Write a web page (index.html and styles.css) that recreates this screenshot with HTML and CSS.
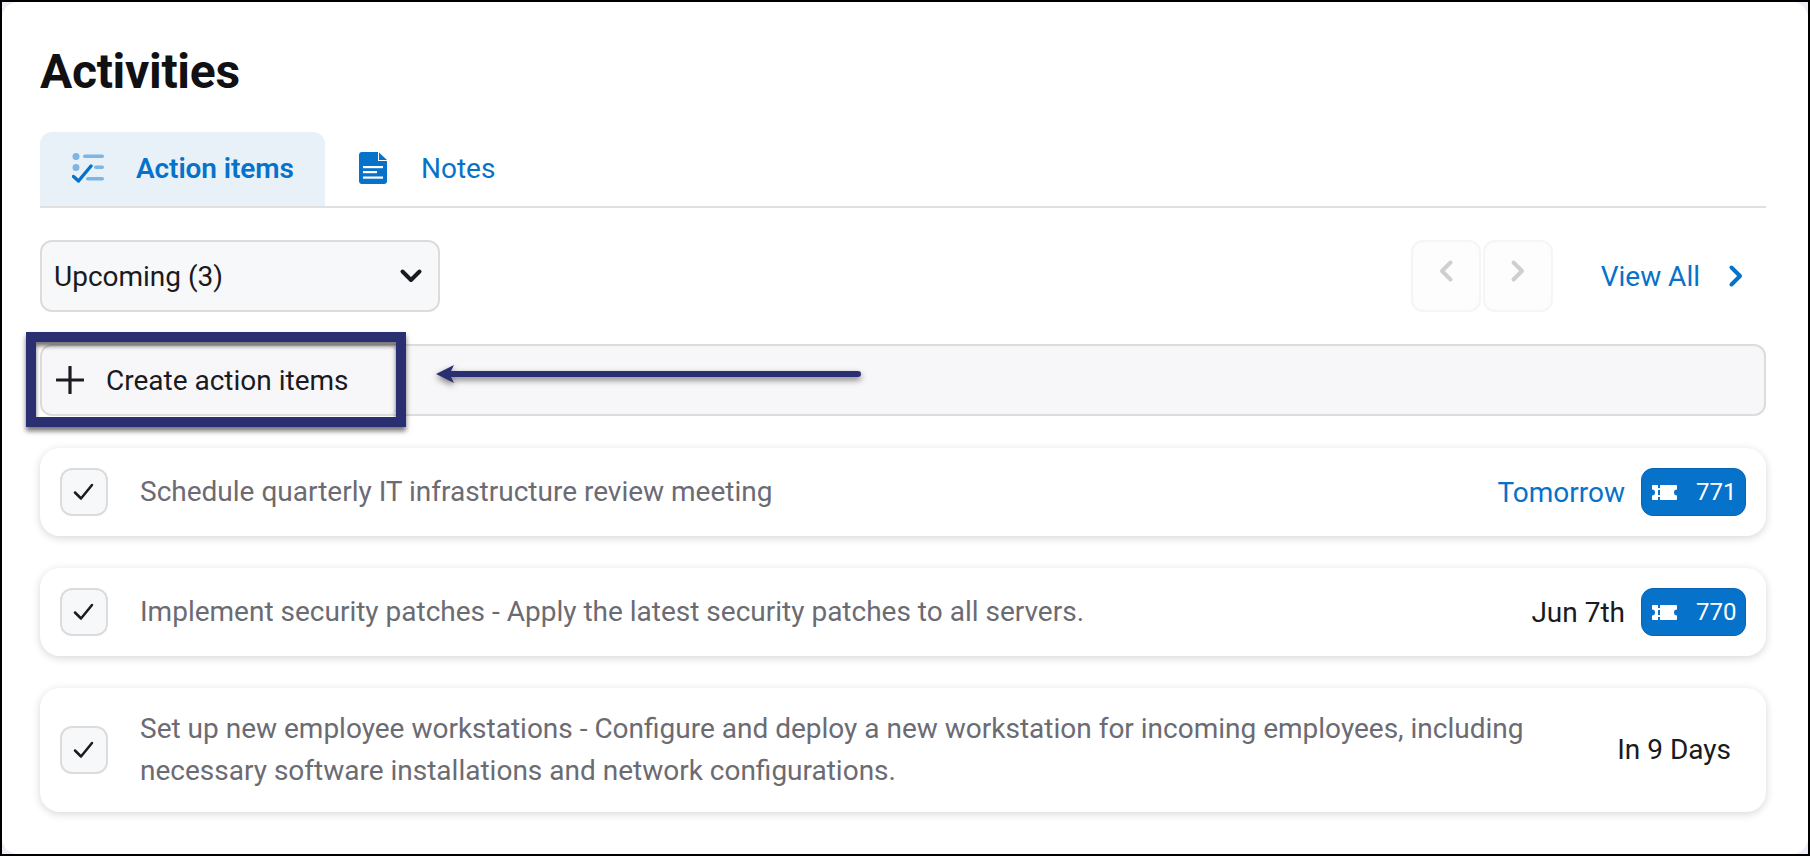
FILE: index.html
```html
<!DOCTYPE html>
<html lang="en">
<head>
<meta charset="utf-8">
<title>Activities</title>
<link rel="stylesheet" href="styles.css">
</head>
<body>
<div class="frame">
  <main class="panel">
    <h1 class="title">Activities</h1>
    <nav class="tabs">
      <a class="tab tab-active">
        <svg class="tab-icon" width="32" height="30" viewBox="0 0 32 30"><circle cx="4" cy="3.5" r="3.5" fill="#7db5e3"/><circle cx="4" cy="14.5" r="3.5" fill="#7db5e3"/><rect x="11" y="1.500" width="21" height="3.600" rx="1.800" fill="#7db5e3"/><rect x="22" y="12.500" width="10" height="3.600" rx="1.800" fill="#7db5e3"/><rect x="14" y="24" width="18" height="3.600" rx="1.800" fill="#7db5e3"/><path d="M1.500 23.500 L6.500 28 L19 13" fill="none" stroke="#0672c9" stroke-width="3.400" stroke-linecap="round" stroke-linejoin="round"/></svg>
        <span>Action items</span>
      </a>
      <a class="tab tab-plain">
        <svg class="tab-icon" width="28" height="32" viewBox="0 0 28 32"><path d="M3 0H19V9H28V29a3 3 0 0 1-3 3H3a3 3 0 0 1-3-3V3a3 3 0 0 1 3-3Z" fill="#0672c9"/><path d="M20 0.500 L28 8 H20Z" fill="#0672c9"/><rect x="4" y="14" width="20" height="2.200" fill="#fff"/><rect x="4" y="19" width="14" height="2.200" fill="#fff"/><rect x="4" y="24.500" width="20" height="2.200" fill="#fff"/></svg>
        <span>Notes</span>
      </a>
    </nav>
    <div class="toolbar">
      <div class="select">
        <span>Upcoming (3)</span>
        <svg width="24" height="16" viewBox="0 0 24 16"><path d="M3.500 3.500 L12 12 L20.500 3.500" fill="none" stroke="#1a1a20" stroke-width="4" stroke-linecap="round" stroke-linejoin="round"/></svg>
      </div>
      <div class="pager">
        <button class="page-btn"><svg width="16" height="24" viewBox="0 0 16 24"><path d="M12.500 3.500 L4 12 L12.500 20.500" fill="none" stroke="#cfcfcf" stroke-width="4" stroke-linecap="round" stroke-linejoin="round"/></svg></button>
        <button class="page-btn"><svg width="16" height="24" viewBox="0 0 16 24"><path d="M3.500 3.500 L12 12 L3.500 20.500" fill="none" stroke="#cfcfcf" stroke-width="4" stroke-linecap="round" stroke-linejoin="round"/></svg></button>
      </div>
      <a class="view-all">
        <span>View All</span>
        <svg width="16" height="24" viewBox="0 0 16 24"><path d="M3.500 3.500 L12 12 L3.500 20.500" fill="none" stroke="#0672c9" stroke-width="4" stroke-linecap="round" stroke-linejoin="round"/></svg>
      </a>
    </div>
    <div class="create-bar">
      <div class="create-btn">
        <svg width="28" height="28" viewBox="0 0 28 28"><path d="M14 1V27M1 14H27" stroke="#1a1a20" stroke-width="3.200" stroke-linecap="round"/></svg>
        <span>Create action items</span>
      </div>
    </div>
    <ul class="items">
      <li class="item">
        <span class="check"><svg width="24" height="20" viewBox="0 0 24 20"><path d="M3 10.500 L9 16.500 L20 3" fill="none" stroke="#1a1a20" stroke-width="2.500" stroke-linecap="round" stroke-linejoin="round"/></svg></span>
        <p class="item-text">Schedule quarterly IT infrastructure review meeting</p>
        <span class="due due-soon">Tomorrow</span>
        <span class="badge"><svg width="25" height="15" viewBox="0 0 25 15"><path fill="#fff" d="M1 0H6V3H8V0H24a1 1 0 0 1 1 1V4.500a3 3 0 0 0 0 6V14a1 1 0 0 1-1 1H8V12H6V15H1a1 1 0 0 1-1-1V10.500a3 3 0 0 0 0-6V1a1 1 0 0 1 1-1ZM6 5V10H8V5Z" fill-rule="evenodd"/></svg><span>771</span></span>
      </li>
      <li class="item">
        <span class="check"><svg width="24" height="20" viewBox="0 0 24 20"><path d="M3 10.500 L9 16.500 L20 3" fill="none" stroke="#1a1a20" stroke-width="2.500" stroke-linecap="round" stroke-linejoin="round"/></svg></span>
        <p class="item-text">Implement security patches - Apply the latest security patches to all servers.</p>
        <span class="due">Jun 7th</span>
        <span class="badge"><svg width="25" height="15" viewBox="0 0 25 15"><path fill="#fff" d="M1 0H6V3H8V0H24a1 1 0 0 1 1 1V4.500a3 3 0 0 0 0 6V14a1 1 0 0 1-1 1H8V12H6V15H1a1 1 0 0 1-1-1V10.500a3 3 0 0 0 0-6V1a1 1 0 0 1 1-1ZM6 5V10H8V5Z" fill-rule="evenodd"/></svg><span>770</span></span>
      </li>
      <li class="item item-tall">
        <span class="check"><svg width="24" height="20" viewBox="0 0 24 20"><path d="M3 10.500 L9 16.500 L20 3" fill="none" stroke="#1a1a20" stroke-width="2.500" stroke-linecap="round" stroke-linejoin="round"/></svg></span>
        <p class="item-text item-text-wrap">Set up new employee workstations - Configure and deploy a new workstation for incoming employees, including necessary software installations and network configurations.</p>
        <span class="due due-only">In 9 Days</span>
      </li>
    </ul>
  </main>
  <div class="callout-box"></div>
  <svg class="callout-arrow" width="428" height="22" viewBox="0 0 428 22"><path d="M1 11 L19 2 L16 8 H423 a3 3 0 0 1 0 6 H16 L19 20Z" fill="#2a2f72"/></svg>
</div>
</body>
</html>
```

FILE: styles.css
```css
* { box-sizing: border-box; }
html, body { margin: 0; padding: 0; }
body {
  width: 1810px;
  height: 856px;
  overflow: hidden;
  font-family: Roboto, "Liberation Sans", sans-serif;
  color: #1a1a20;
}
.frame {
  position: relative;
  width: 1810px;
  height: 856px;
  border: 2px solid #000;
  background: #eeeef8;
}
.panel {
  width: 100%;
  height: 100%;
  background: #fff;
  border-radius: 16px;
  padding: 42px 42px 0 38px;
}
.title {
  margin: 0;
  height: 56px;
  font-size: 48px;
  line-height: 56px;
  font-weight: 700;
  color: #111114;
  letter-spacing: -0.3px;
}
.tabs {
  display: flex;
  margin-top: 32px;
  height: 76px;
  border-bottom: 2px solid #e0e0e0;
}
.tab {
  display: flex;
  align-items: center;
  font-size: 28px;
  color: #0672c9;
  padding-bottom: 2px;
}
.tab-active {
  width: 285px;
  padding-left: 32px;
  gap: 32px;
  background: #e8f1f7;
  border-radius: 12px 12px 0 0;
  font-weight: 600;
  letter-spacing: -0.1px;
}
.tab-plain {
  padding-left: 34px;
  gap: 34px;
}
.toolbar {
  display: flex;
  align-items: center;
  margin-top: 32px;
  height: 72px;
}
.select {
  display: flex;
  align-items: center;
  justify-content: space-between;
  width: 400px;
  height: 72px;
  padding: 0 15px 0 12px;
  background: #f7f8fa;
  border: 2px solid #dcdcdc;
  border-radius: 12px;
  font-size: 28px;
}
.pager {
  display: flex;
  gap: 2px;
  margin-left: auto;
}
.page-btn {
  width: 70px;
  height: 72px;
  padding: 0 0 10px;
  display: flex;
  align-items: center;
  justify-content: center;
  background: #fdfdfd;
  border: 2px solid #f5f5f5;
  border-radius: 12px;
}
.view-all {
  display: flex;
  align-items: center;
  gap: 28px;
  margin-left: 48px;
  margin-right: 22px;
  font-size: 28px;
  color: #0672c9;
}
.create-bar {
  margin-top: 32px;
  height: 72px;
  background: #f7f7f9;
  border: 2px solid #dcdcdc;
  border-radius: 12px;
}
.create-btn {
  display: flex;
  align-items: center;
  gap: 22px;
  width: 358px;
  height: 68px;
  padding-left: 14px;
  font-size: 28px;
  color: #1a1a20;
  border-right: 2px solid #dcdcdc;
  border-radius: 12px;
}
.items {
  list-style: none;
  margin: 32px 0 0;
  padding: 0;
  display: flex;
  flex-direction: column;
  gap: 32px;
}
.item {
  display: flex;
  align-items: center;
  height: 88px;
  padding: 0 20px;
  background: #fff;
  border-radius: 20px;
  box-shadow: 0 2px 8px rgba(0, 0, 0, 0.16);
  font-size: 28px;
}
.item-tall { height: 124px; }
.check {
  flex: none;
  display: flex;
  align-items: center;
  justify-content: center;
  width: 48px;
  height: 48px;
  background: #f7f8fa;
  border: 2px solid #dcdcdc;
  border-radius: 12px;
}
.item-text {
  flex: 1;
  margin: 0 0 0 32px;
  color: #6b6b73;
  line-height: 42px;
}
.item-text-wrap { flex: none; width: 1400px; }
.due { margin-left: auto; margin-right: 16px; }
.due-soon { color: #0672c9; }
.due-only { margin-right: 15px; padding-bottom: 2px; }
.badge {
  display: flex;
  align-items: center;
  gap: 19px;
  width: 105px;
  height: 48px;
  padding-left: 10px;
  background: #0672c9;
  border: 1px solid #0a66b3;
  border-radius: 12px;
  color: #fff;
  font-size: 24px;
}
.callout-box {
  position: absolute;
  left: 24px;
  top: 330px;
  width: 380px;
  height: 95px;
  border: 10px solid #2a2f72;
  box-shadow: 0 4px 5px rgba(0, 0, 0, 0.55), inset 0 4px 4px rgba(0, 0, 0, 0.55);
}
.callout-arrow {
  position: absolute;
  left: 433px;
  top: 361px;
  filter: drop-shadow(0 3px 3px rgba(0, 0, 0, 0.5));
}
```
